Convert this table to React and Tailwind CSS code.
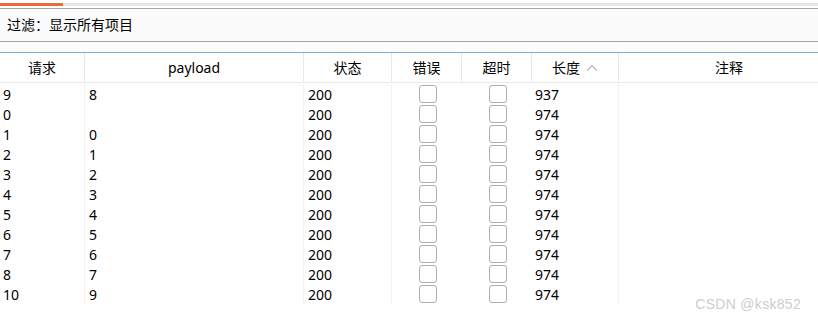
const rows = [
  ['9', '8', '200', '937'],
  ['0', '', '200', '974'],
  ['1', '0', '200', '974'],
  ['2', '1', '200', '974'],
  ['3', '2', '200', '974'],
  ['4', '3', '200', '974'],
  ['5', '4', '200', '974'],
  ['6', '5', '200', '974'],
  ['7', '6', '200', '974'],
  ['8', '7', '200', '974'],
  ['10', '9', '200', '974'],
]

const cols = 'grid grid-cols-[85px_219px_88px_70px_70px_87px_220px]'

function Box() {
  return <div className="w-[18px] h-[18px] rounded-[3px] border border-[#adadad] bg-white" />
}

export default function App() {
  return (
    <div className="w-[818px] h-[319px] overflow-hidden bg-white text-[14px] text-black font-['Noto_Sans','Noto_Sans_CJK_SC',sans-serif] relative">
      {/* tab strip */}
      <div className="h-[3px]" />
      <div className="flex h-[3px]">
        <div className="w-[63px] bg-[#f0683a]" />
        <div className="flex-1 bg-[#e6e6e6]" />
      </div>
      <div className="h-[2px]" />
      <div className="h-px bg-[#a5a5a5]" />

      {/* filter bar */}
      <div className="h-[32px] bg-[#fbfbfb] flex items-center pl-[7px] leading-none">过滤：显示所有项目</div>
      <div className="h-px bg-[#a5a5a5]" />
      <div className="h-[10px] bg-[#fbfbfb]" />
      <div className="h-px bg-[#7eaad9]" />

      {/* table */}
      <div className="w-[839px]">
        <div className={`${cols} h-[30px] border-b border-[#ebebeb]`}>
          {['请求', 'payload', '状态', '错误', '超时'].map((h) => (
            <div key={h} className="flex items-center justify-center border-r border-[#e8e8e8]">{h}</div>
          ))}
          <div className="flex items-center justify-center gap-[6px] border-r border-[#e8e8e8]">
            <span>长度</span>
            <svg width="12" height="8" viewBox="0 0 12 8" fill="none" stroke="#b5b5b5" strokeWidth="1.2">
              <path d="M1 6.5 6 1.5l5 5" />
            </svg>
          </div>
          <div className="flex items-center justify-center">注释</div>
        </div>
        <div className={`${cols} pt-[1px]`}>
          {rows.map((r, i) => (
            <div key={i} className="contents">
              <div className="h-[20px] flex items-center pl-[3px] border-r border-[#f2f2f2]">{r[0]}</div>
              <div className="h-[20px] flex items-center pl-[4px] border-r border-[#f2f2f2]">{r[1]}</div>
              <div className="h-[20px] flex items-center pl-[4px] border-r border-[#f2f2f2]">{r[2]}</div>
              <div className="h-[20px] flex items-center pl-[27px]"><Box /></div>
              <div className="h-[20px] flex items-center pl-[27px]"><Box /></div>
              <div className="h-[20px] flex items-center pl-[3px] border-r border-[#f2f2f2]">{r[3]}</div>
              <div className="h-[20px]" />
            </div>
          ))}
        </div>
      </div>

      <div className="absolute right-[17px] bottom-[8px] text-[14px] text-[#cdcdcd] font-['Liberation_Sans',sans-serif] leading-none tracking-[0.3px]">CSDN @ksk852</div>
    </div>
  )
}
